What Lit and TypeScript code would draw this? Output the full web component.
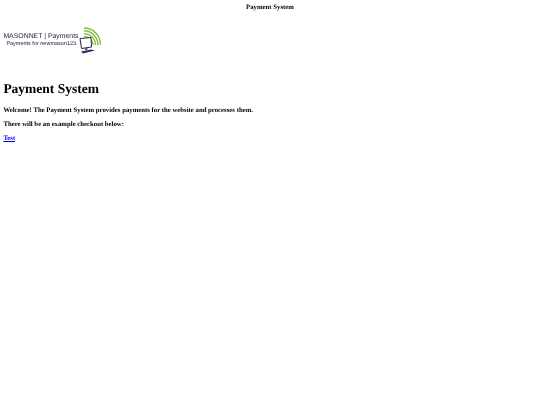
import { LitElement, html, css } from "lit";
import { customElement } from "lit/decorators.js";

@customElement("app-root")
export class AppRoot extends LitElement {
  static styles = css`
    :host {
      display: block;
      min-height: 405px;
      background: #fff;
      color: #000;
      font-family: "Liberation Serif", "Times New Roman", serif;
      font-size: 6.75px;
      line-height: 7.8px;
      font-weight: bold;
      text-rendering: geometricPrecision;
    }
    .page { padding: 3.375px; filter: blur(0.2px); }
    .title { text-align: center; padding-top: 1px; }
    .logo {
      display: flex;
      width: 102px;
      height: 28px;
      margin-top: 15px;
      position: relative;
    }
    .logo-text {
      display: flex;
      flex-direction: column;
      font-family: "Liberation Sans", Arial, sans-serif;
      font-weight: normal;
      color: #23263f;
      white-space: nowrap;
      padding-top: 6px;
    }
    .logo-main { font-size: 6.9px; line-height: 8px; }
    .logo-sub { font-size: 5.5px; line-height: 7px; padding-left: 3px; }
    .logo svg { position: absolute; left: 73px; top: 0; }
    h1 {
      font-size: 13.5px;
      line-height: 15.5px;
      margin: 26px 0 0;
    }
    p { margin: 6.3px 0 0; }
    h1 + p { margin-top: 10.3px; }
    a { color: #00e; text-decoration: underline; }
  `;

  render() {
    return html`
      <div class="page">
        <div class="title">Payment System</div>
        <div class="logo">
          <div class="logo-text">
            <span class="logo-main">MASONNET | Payments</span>
            <span class="logo-sub">Payments for newmason123.</span>
          </div>
          <svg width="27" height="28" viewBox="0 0 27 28" fill="none">
            <g stroke="#7fbf3f" stroke-width="1.4">
              <path d="M8 1 C17 1 24.5 8 24.5 18" />
              <path d="M8 3.8 C15.5 3.8 22 10 22 18" />
              <path d="M8 6.6 C14 6.6 19.5 11.5 19.5 18" />
              <path d="M8 9.4 C12.5 9.4 17 13 17 18" />
            </g>
            <path d="M4 11.5 L15 10.5 L15.5 20 L5.5 21.5 Z" fill="#fff" stroke="#23263f" stroke-width="1" />
            <path d="M9 21.5 L11.5 21.2 L11.5 22.5 L9 23 Z" fill="#23263f" />
            <path d="M5 24.5 L15 22.5 L19 23.5 L7 26.5 Z" fill="#2b2f6a" />
          </svg>
        </div>
        <h1>Payment System</h1>
        <p>Welcome! The Payment System provides payments for the website and processes them.</p>
        <p>There will be an example checkout below:</p>
        <p><a href="#">Test</a></p>
      </div>
    `;
  }
}
